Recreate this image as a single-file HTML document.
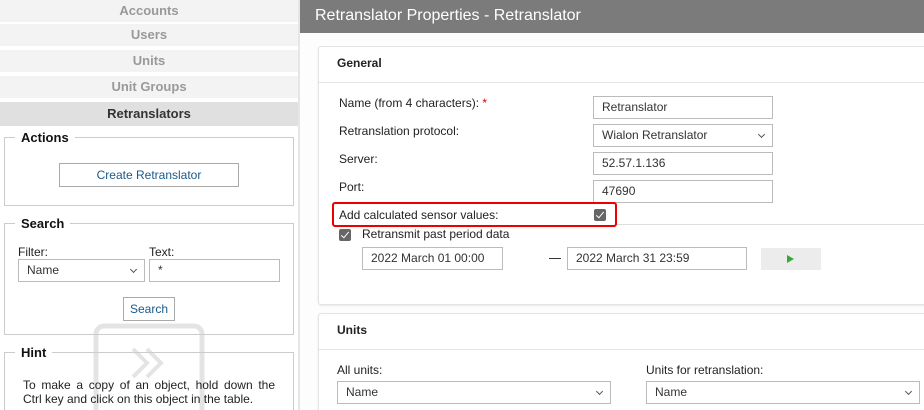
<!DOCTYPE html>
<html style="height:410px;overflow:hidden"><head><style>
*{box-sizing:border-box;margin:0;padding:0}
body{width:924px;height:410px;overflow:hidden;font-family:"Liberation Sans",Arial,sans-serif;font-size:12px;color:#222;background:#fff;position:relative}
.a{position:absolute}
.tab{position:absolute;left:0;width:298px;height:22px;background:#f3f3f3;color:#999;font-weight:bold;font-size:13px;text-align:center;line-height:21px}
fieldset{position:absolute;border:1px solid #ccc;left:4px;width:290px}
legend{font-weight:bold;font-size:13px;padding:0 6px;margin-left:10px;color:#111}
.in{position:absolute;border:1px solid #bbb;background:#fff;height:23px;line-height:21px;padding-left:8px;color:#333;font-size:12px}
.sel::after{content:"";position:absolute;right:8px;top:7px;width:4px;height:4px;border-right:1px solid #555;border-bottom:1px solid #555;transform:rotate(45deg)}
.lbl{position:absolute;font-size:12px;color:#222}
.cb{position:absolute;width:12px;height:12px;background:#666;border-radius:2px}
.cb::after{content:"";position:absolute;left:4px;top:1px;width:3px;height:7px;border-right:1.6px solid #fff;border-bottom:1.6px solid #fff;transform:rotate(40deg)}
</style></head><body>
<div class="tab" style="top:0">Accounts</div>
<div class="tab" style="top:24px">Users</div>
<div class="tab" style="top:50px">Units</div>
<div class="tab" style="top:76px">Unit Groups</div>
<div class="tab" style="top:102px;background:#e0e0e0;color:#333;height:24px;line-height:24px">Retranslators</div>
<div class="a" style="left:298px;top:0;width:2px;height:410px;background:#e6e6e6"></div>

<svg class="a" style="left:93px;top:323px" width="112" height="90"><rect x="3" y="3" width="106" height="100" rx="8" fill="none" stroke="#e4e4e4" stroke-width="5"/><path d="M40 26l14 14-14 14M54 26l14 14-14 14" fill="none" stroke="#e4e4e4" stroke-width="4"/></svg>

<fieldset style="top:130px;height:76px"><legend>Actions</legend></fieldset>
<div class="a" style="left:59px;top:163px;width:180px;height:24px;border:1px solid #aaa;text-align:center;line-height:22px;color:#1a5a8a">Create Retranslator</div>
<fieldset style="top:216px;height:119px"><legend>Search</legend></fieldset>
<div class="lbl" style="left:18px;top:245px">Filter:</div>
<div class="lbl" style="left:149px;top:245px">Text:</div>
<div class="in sel" style="left:18px;top:259px;width:127px">Name</div>
<div class="in" style="left:149px;top:259px;width:131px">*</div>
<div class="a" style="left:123px;top:297px;width:52px;height:24px;border:1px solid #aaa;text-align:center;line-height:22px;color:#1a5a8a">Search</div>
<fieldset style="top:345px;height:80px"><legend>Hint</legend></fieldset>
<div class="a" style="left:23px;top:378px;width:252px;line-height:14px;text-align:justify;text-align-last:left">To make a copy of an object, hold down the Ctrl key and click on this object in the table.</div>

<div class="a" style="left:300px;top:0;width:624px;height:410px;background:#fdfdfd"></div>
<div class="a" style="left:300px;top:0;width:624px;height:33px;background:#7b7b7b;color:#fff;font-size:16px;line-height:32px;padding-left:15px">Retranslator Properties - Retranslator</div>
<div class="a" style="left:318px;top:46px;width:610px;height:259px;background:#fff;border:1px solid #e4e4e4;border-radius:3px;box-shadow:0 1px 2px rgba(0,0,0,.08)"></div>
<div class="a" style="left:318px;top:82px;width:606px;height:1px;background:#e4e4e4"></div>
<div class="a" style="left:337px;top:56px;font-weight:bold;font-size:12px">General</div>
<div class="lbl" style="left:339px;top:96px">Name (from 4 characters): <span style="color:#d00">*</span></div>
<div class="lbl" style="left:339px;top:124px">Retranslation protocol:</div>
<div class="lbl" style="left:339px;top:152px">Server:</div>
<div class="lbl" style="left:339px;top:180px">Port:</div>
<div class="in" style="left:593px;top:96px;width:180px">Retranslator</div>
<div class="in sel" style="left:593px;top:124px;width:180px">Wialon Retranslator</div>
<div class="in" style="left:593px;top:152px;width:180px">52.57.1.136</div>
<div class="in" style="left:593px;top:180px;width:180px">47690</div>
<div class="a" style="left:616px;top:224px;width:308px;height:1px;background:#ddd"></div>
<div class="a" style="left:332px;top:202px;width:285px;height:25px;border:2px solid #e00;border-radius:3px"></div>
<div class="lbl" style="left:339px;top:208px">Add calculated sensor values:</div>
<div class="cb" style="left:594px;top:209px"></div>
<div class="cb" style="left:339px;top:229px"></div>
<div class="lbl" style="left:362px;top:227px">Retransmit past period data</div>
<div class="in" style="left:362px;top:247px;width:141px">2022 March 01 00:00</div>
<div class="a" style="left:549px;top:258px;width:12px;height:1px;background:#333"></div>
<div class="in" style="left:567px;top:247px;width:180px">2022 March 31 23:59</div>
<div class="a" style="left:761px;top:248px;width:60px;height:22px;background:#ececec"></div>
<div class="a" style="left:787px;top:255px;width:0;height:0;border-left:7px solid #3a3;border-top:4.5px solid transparent;border-bottom:4.5px solid transparent"></div>

<div class="a" style="left:318px;top:313px;width:610px;height:97px;background:#fff;border:1px solid #e4e4e4;border-bottom:none;border-radius:3px 3px 0 0;box-shadow:0 1px 2px rgba(0,0,0,.08)"></div>
<div class="a" style="left:318px;top:349px;width:606px;height:1px;background:#e4e4e4"></div>
<div class="a" style="left:337px;top:323px;font-weight:bold">Units</div>
<div class="lbl" style="left:337px;top:363px">All units:</div>
<div class="lbl" style="left:646px;top:363px">Units for retranslation:</div>
<div class="in sel" style="left:337px;top:381px;width:274px">Name</div>
<div class="in sel" style="left:646px;top:381px;width:274px">Name</div>
</body></html>
